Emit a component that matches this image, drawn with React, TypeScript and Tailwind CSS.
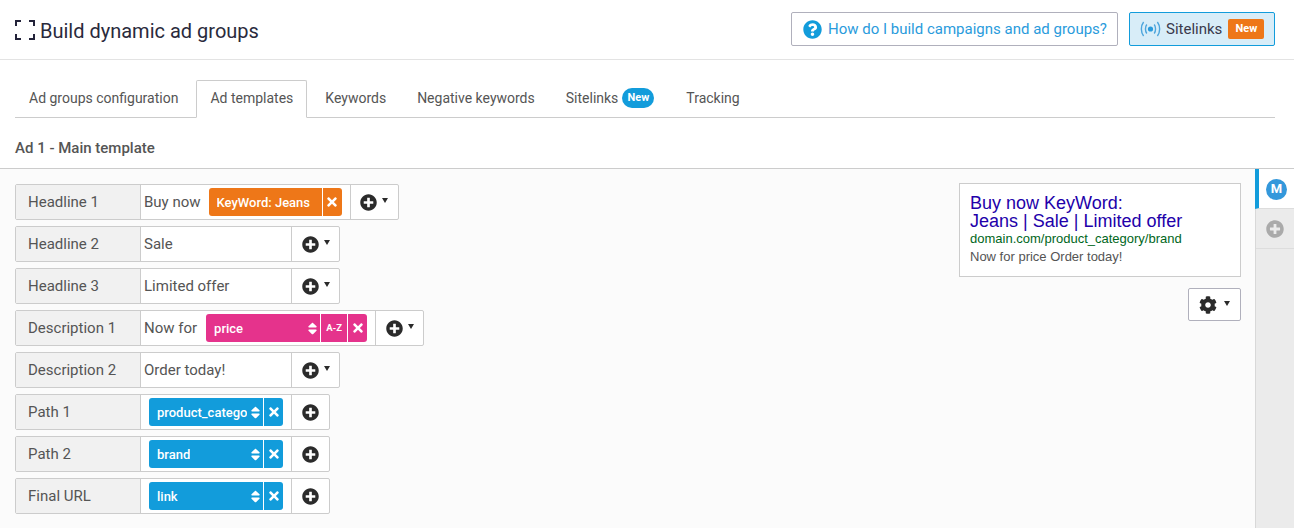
import { FaCog, FaPlusCircle, FaQuestionCircle, FaSort, FaTimes } from 'react-icons/fa';

const tabs = ['Ad groups configuration', 'Ad templates', 'Keywords', 'Negative keywords', 'Sitelinks', 'Tracking'];

const AddBtn = ({ caret = true }: { caret?: boolean }) => (
  <div className={`flex items-center justify-center border-l border-[#ccc] h-full ${caret ? 'w-[48px]' : 'w-[38px]'}`}>
    <FaPlusCircle className="w-[17px] h-[17px] text-[#2b2b2b]" />
    {caret && <span className="ml-[5px] mb-[3px] w-0 h-0 border-x-[3px] border-x-transparent border-t-[5px] border-t-[#2b2b2b]" />}
  </div>
);

const Chip = ({ label, color, sort = true, az = false, w }: { label: string; color: string; sort?: boolean; az?: boolean; w: string }) => (
  <div className={`flex h-[28px] rounded-[3px] text-white text-[13px] font-medium ${color}`}>
    <div className={`flex items-center justify-between pl-[8px] pr-[2px] overflow-hidden ${w}`}>
      <span className="whitespace-nowrap overflow-hidden pt-px">{label}</span>
      {sort && <FaSort className="w-[11px] h-[15px] shrink-0" />}
    </div>
    {az && <div className="w-[27px] border-l border-white flex items-center justify-center text-[9.5px] font-bold">A-Z</div>}
    <div className="w-[20px] border-l border-white flex items-center justify-center">
      <FaTimes className="w-[14px] h-[14px]" />
    </div>
  </div>
);

const Row = ({ label, children, caret = true, wide = false }: { label: string; children: React.ReactNode; caret?: boolean; wide?: boolean }) => (
  <div className="flex w-fit h-[36px] border border-[#ccc] rounded-[2px] bg-white text-[15px]">
    <div className="w-[125px] shrink-0 bg-[#f1f1f1] border-r border-[#ccc] pl-[12px] flex items-center">{label}</div>
    <div className={`flex items-center h-full ${wide ? 'pl-[3px] pr-[8px]' : 'w-[150px] pl-[3px]'}`}>{children}</div>
    <AddBtn caret={caret} />
  </div>
);

export default function App() {
  return (
    <div className="h-[528px] overflow-hidden bg-white text-[#555] text-[14px] flex flex-col font-['Roboto',sans-serif]">
      {/* Header */}
      <div className="h-[60px] shrink-0 border-b border-[#e3e3e3] pl-[15px] pr-[19px] pt-[12px] flex items-start justify-between">
        <div className="flex items-center gap-[5px] h-[37px] text-[20px] text-[#2a2a3c]">
          <svg width="20" height="20" viewBox="0 0 20 20" fill="none" stroke="#23233a" strokeWidth="2" className="-mt-[2px]">
            <path d="M1 6V1H6M14 1H19V6M1 14V19H6M14 19H19V14" />
          </svg>
          Build dynamic ad groups
        </div>
        <div className="flex gap-[11px]">
          <div className="h-[34px] w-[327px] border border-[#b0b0bc] rounded-[2px] flex items-center pl-[11px] gap-[6px] text-[#2a9bdc] text-[15px]">
            <FaQuestionCircle className="w-[19px] h-[19px] text-[#129cdb]" />
            How do I build campaigns and ad groups?
          </div>
          <div className="h-[34px] w-[146px] border border-[#129cdb] bg-[#d8edf8] rounded-[2px] flex items-center pl-[10px] text-[#3a3a4c] text-[15px]">
            <svg width="21" height="16" viewBox="0 0 21 16" fill="none" stroke="#4da5dc" strokeWidth="1.4" className="mr-[5px]">
              <circle cx="10.5" cy="8" r="2.6" fill="#2a9bdc" stroke="none" />
              <path d="M6.8 3.5C5 6 5 10 6.8 12.5M14.2 3.5C16 6 16 10 14.2 12.5M3.6 1C0.6 5 0.6 11 3.6 15M17.4 1C20.4 5 20.4 11 17.4 15" />
            </svg>
            Sitelinks
            <span className="ml-[6px] w-[36px] h-[20px] rounded-[2px] bg-[#ee7718] text-white text-[11px] font-bold flex items-center justify-center">New</span>
          </div>
        </div>
      </div>

      {/* Tabs */}
      <div className="mt-[20px] ml-[15px] mr-[19px] h-[38px] shrink-0 border-b border-[#ccc] flex">
        {tabs.map((t) => (
          <div
            key={t}
            className={`h-[38px] flex items-center pb-[2px] ${t === 'Keywords' || t === 'Negative keywords' ? 'mr-[3px]' : 'mr-[4px]'} ${t === 'Ad templates' ? 'bg-white border border-[#ccc] border-b-white rounded-t-[2px] px-[13px]' : 'px-[14px]'}`}
          >
            {t}
            {t === 'Sitelinks' && (
              <span className="ml-[4px] w-[32px] h-[20px] rounded-full bg-[#129cdb] text-white text-[11px] font-bold flex items-center justify-center">New</span>
            )}
          </div>
        ))}
      </div>

      {/* Section title */}
      <div className="h-[51px] shrink-0 border-b border-[#ccc] pl-[15px] pt-[10px] flex items-center font-medium text-[15px]">Ad 1 - Main template</div>

      {/* Body */}
      <div className="flex-1 flex bg-[#fbfbfb] min-h-0">
        <div className="flex-1 pl-[15px] pt-[15px] flex flex-col gap-[6px]">
          <Row label="Headline 1" wide>
            <span className="mr-[8px]">Buy now</span>
            <Chip label="KeyWord: Jeans" color="bg-[#ee7718]" sort={false} w="w-[113px]" />
          </Row>
          <Row label="Headline 2">Sale</Row>
          <Row label="Headline 3">Limited offer</Row>
          <Row label="Description 1" wide>
            <span className="mr-[9px]">Now for</span>
            <Chip label="price" color="bg-[#e5338c]" az w="w-[114px]" />
          </Row>
          <Row label="Description 2">Order today!</Row>
          <Row label="Path 1" caret={false}>
            <div className="pl-[5px]"><Chip label="product_catego" color="bg-[#129cdb]" w="w-[114px]" /></div>
          </Row>
          <Row label="Path 2" caret={false}>
            <div className="pl-[5px]"><Chip label="brand" color="bg-[#129cdb]" w="w-[114px]" /></div>
          </Row>
          <Row label="Final URL" caret={false}>
            <div className="pl-[5px]"><Chip label="link" color="bg-[#129cdb]" w="w-[114px]" /></div>
          </Row>
        </div>

        {/* Preview */}
        <div className="w-[282px] shrink-0 mr-[14px] pt-[14px] flex flex-col items-end">
          <div className="w-full h-[94px] border border-[#ccc] bg-white pl-[10px] pt-[10px] font-['Liberation_Sans',sans-serif]">
            <div className="text-[18px] leading-[18px] text-[#2200aa]">Buy now KeyWord:<br />Jeans | Sale | Limited offer</div>
            <div className="mt-px text-[13px] leading-[16px] text-[#006621]">domain.com/product_category/brand</div>
            <div className="text-[13px] leading-[20px] text-[#545454]">Now for price Order today!</div>
          </div>
          <div className="mt-[11px] w-[53px] h-[33px] border border-[#b0b0bc] rounded-[2px] bg-white flex items-center justify-center gap-[7px]">
            <FaCog className="w-[18px] h-[18px] text-[#2b2b2b]" />
            <span className="mb-[3px] w-0 h-0 border-x-[3px] border-x-transparent border-t-[5px] border-t-[#2b2b2b]" />
          </div>
        </div>

        {/* Side tabs */}
        <div className="w-[39px] shrink-0 bg-[#ebebeb] border-l border-[#d8d8d8]">
          <div className="h-[40px] -ml-px pt-px bg-white border-l-[4px] border-[#129cdb] border-b border-b-[#ddd] flex items-center justify-center">
            <span className="w-[21px] h-[21px] rounded-full bg-[#3498db] text-white text-[13px] font-bold flex items-center justify-center">M</span>
          </div>
          <div className="h-[40px] border-b border-[#ddd] flex items-center justify-center">
            <FaPlusCircle className="w-[18px] h-[18px] text-[#aaa]" />
          </div>
        </div>
      </div>
    </div>
  );
}
